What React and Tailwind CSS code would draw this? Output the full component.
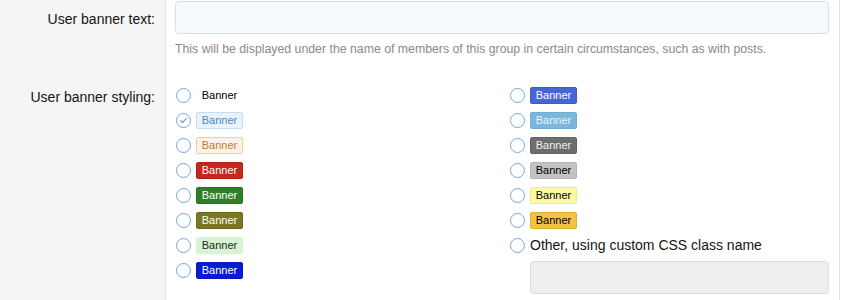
import React from "react";

// Banner style options: [bg/border/text classes]
const LEFT = [
  "text-black",
  "bg-[#e9f3fc] border border-[#c5ddf3] text-[#4a89c8]",
  "bg-[#fdf3e5] border border-[#f1cf9c] text-[#c47a32]",
  "bg-[#c2281c] border border-[#b02218] text-white",
  "bg-[#307f27] border border-[#2b7222] text-white",
  "bg-[#7b7723] border border-[#6d691e] text-white",
  "bg-[#d9f4d2] border border-[#d9f4d2] text-[#1a2a18]",
  "bg-[#0a19d4] border border-[#0815bb] text-white",
];

const RIGHT = [
  "bg-[#4766d6] border border-[#3f5bc4] text-white",
  "bg-[#7ab7dc] border border-[#6fadd3] text-[#e8f4fb]",
  "bg-[#6d6d6d] border border-[#646464] text-[#f0f0f0]",
  "bg-[#c3c3c3] border border-[#b5b5b5] text-black",
  "bg-[#fdf8a3] border border-[#f1eb8c] text-black",
  "bg-[#f2c243] border border-[#e0b033] text-black",
];

function Radio({ checked }) {
  return (
    <span className="w-[15px] h-[15px] shrink-0 rounded-full border-[1.5px] border-[#72a9dc] bg-white flex items-center justify-center">
      {checked && (
        <svg width="9" height="9" viewBox="0 0 10 10" fill="none">
          <path d="M2 5.2 L4.2 7.3 L8 2.8" stroke="#72a9dc" strokeWidth="1.4" strokeLinecap="round" strokeLinejoin="round" />
        </svg>
      )}
    </span>
  );
}

function Option({ cls, checked }) {
  return (
    <label className="flex items-center gap-[5px] h-[25px]">
      <Radio checked={checked} />
      <span className={`inline-flex items-center justify-center w-[47px] h-[17px] rounded-[2px] text-[11px] leading-none ${cls}`}>
        Banner
      </span>
    </label>
  );
}

export default function App() {
  return (
    <div
      className="w-[840px] h-[300px] border-r border-[#e2e2e2] bg-white flex flex-col text-[#141414]"
      style={{ fontFamily: '"Liberation Sans", Arial, sans-serif' }}
    >
      {/* Banner text row */}
      <div className="flex">
        <div className="w-[166px] shrink-0 bg-[#f5f5f5] border-r border-[#e4e4e4] pr-[10px] pt-[9px] text-right text-[14px]">
          User banner text:
        </div>
        <div className="flex-1 pl-[9px] pr-[10px] pt-[1px] pb-[21px]">
          <div className="h-[33px] rounded-[4px] border border-[#dcdfe2] bg-[#f6fafd]" />
          <p className="mt-[6px] text-[12.3px] text-[#8a8a8a]">
            This will be displayed under the name of members of this group in certain circumstances, such as with posts.
          </p>
        </div>
      </div>

      {/* Banner styling row */}
      <div className="flex flex-1">
        <div className="w-[166px] shrink-0 bg-[#f5f5f5] border-r border-[#e4e4e4] pr-[10px] pt-[8px] text-right text-[14px]">
          User banner styling:
        </div>
        <div className="flex-1 pl-[10px] pr-[10px] pt-[4px] grid grid-cols-[334px_1fr]">
          <div className="flex flex-col">
            {LEFT.map((c, i) => (
              <Option key={i} cls={c} checked={i === 1} />
            ))}
          </div>
          <div className="flex flex-col">
            {RIGHT.map((c, i) => (
              <Option key={i} cls={c} />
            ))}
            <label className="flex items-center gap-[5px] h-[25px] text-[14px]">
              <Radio />
              <span>Other, using custom CSS class name</span>
            </label>
            <div className="ml-[20px] mt-[3px] h-[33px] rounded-[4px] border border-[#dcdcdc] bg-[#eeeeee]" />
          </div>
        </div>
      </div>
    </div>
  );
}
